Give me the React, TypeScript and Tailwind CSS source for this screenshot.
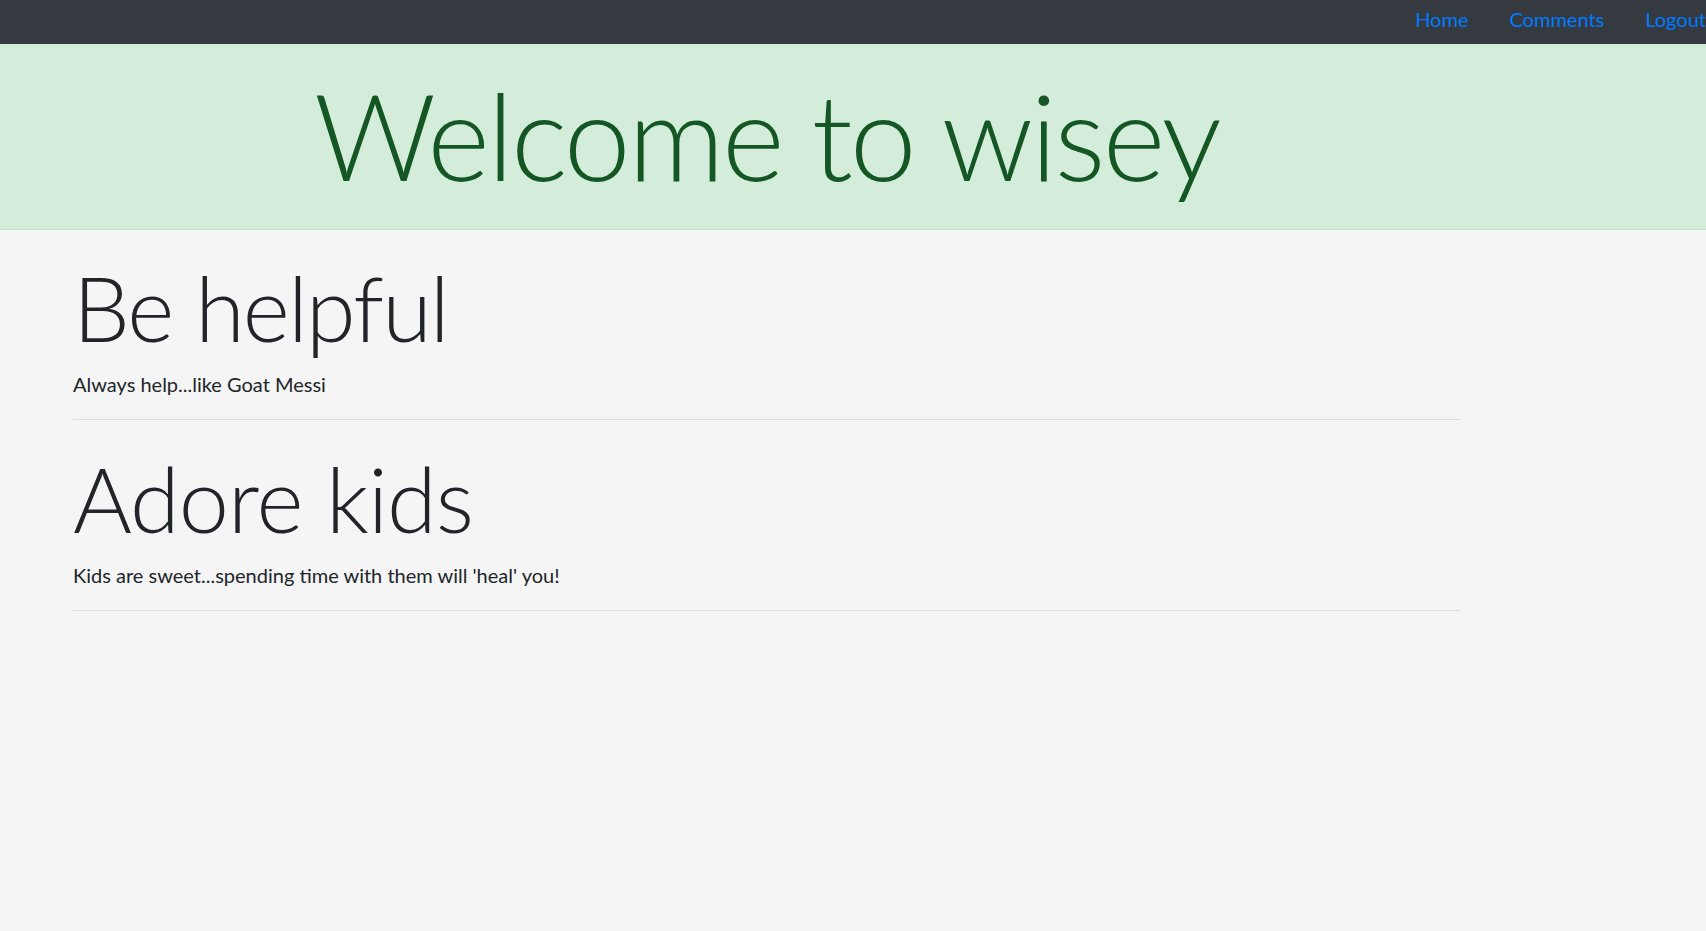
import React from "react";

const font = { fontFamily: "Lato, 'Open Sans', sans-serif" };

const items = [
  { t: "Be helpful", d: "Always help...like Goat Messi", track: "tracking-[-1.8px]", mb: "mb-[24px]" },
  { t: "Adore kids", d: "Kids are sweet...spending time with them will 'heal' you!", track: "tracking-[-0.9px]", mb: "mb-[24px]" },
];

export default function App() {
  return (
    <div className="min-h-[931px] w-[1706px] overflow-hidden bg-[#f5f5f5] text-[#212529]" style={font}>
      <nav className="flex h-[44px] items-center justify-end bg-[#343a40]">
        <ul className="flex gap-[41px] pb-[6px] text-[20px] leading-[30px] text-[#007bff]">
          <li><a href="#">Home</a></li>
          <li><a href="#">Comments</a></li>
          <li><a href="#">Logout</a></li>
        </ul>
      </nav>
      <div className="h-[186px] border-b border-[#c3e6cb] bg-[#d4edda] pl-[314px] pt-[19px] text-[#155724]">
        <h1 className="text-[120px] font-light leading-[1.2] tracking-[-2.7px]">Welcome to wisey</h1>
      </div>
      <main className="ml-[73px] w-[1387px] pt-[23px]">
        {items.map((it) => (
          <section key={it.t} className={`${it.mb} border-b border-[#dcdcdc] pb-[20px]`}>
            <h2 className={`mb-[8px] text-[90px] font-light leading-[1.2] ${it.track}`}>{it.t}</h2>
            <p className="text-[20px] leading-[30px]">{it.d}</p>
          </section>
        ))}
      </main>
    </div>
  );
}
